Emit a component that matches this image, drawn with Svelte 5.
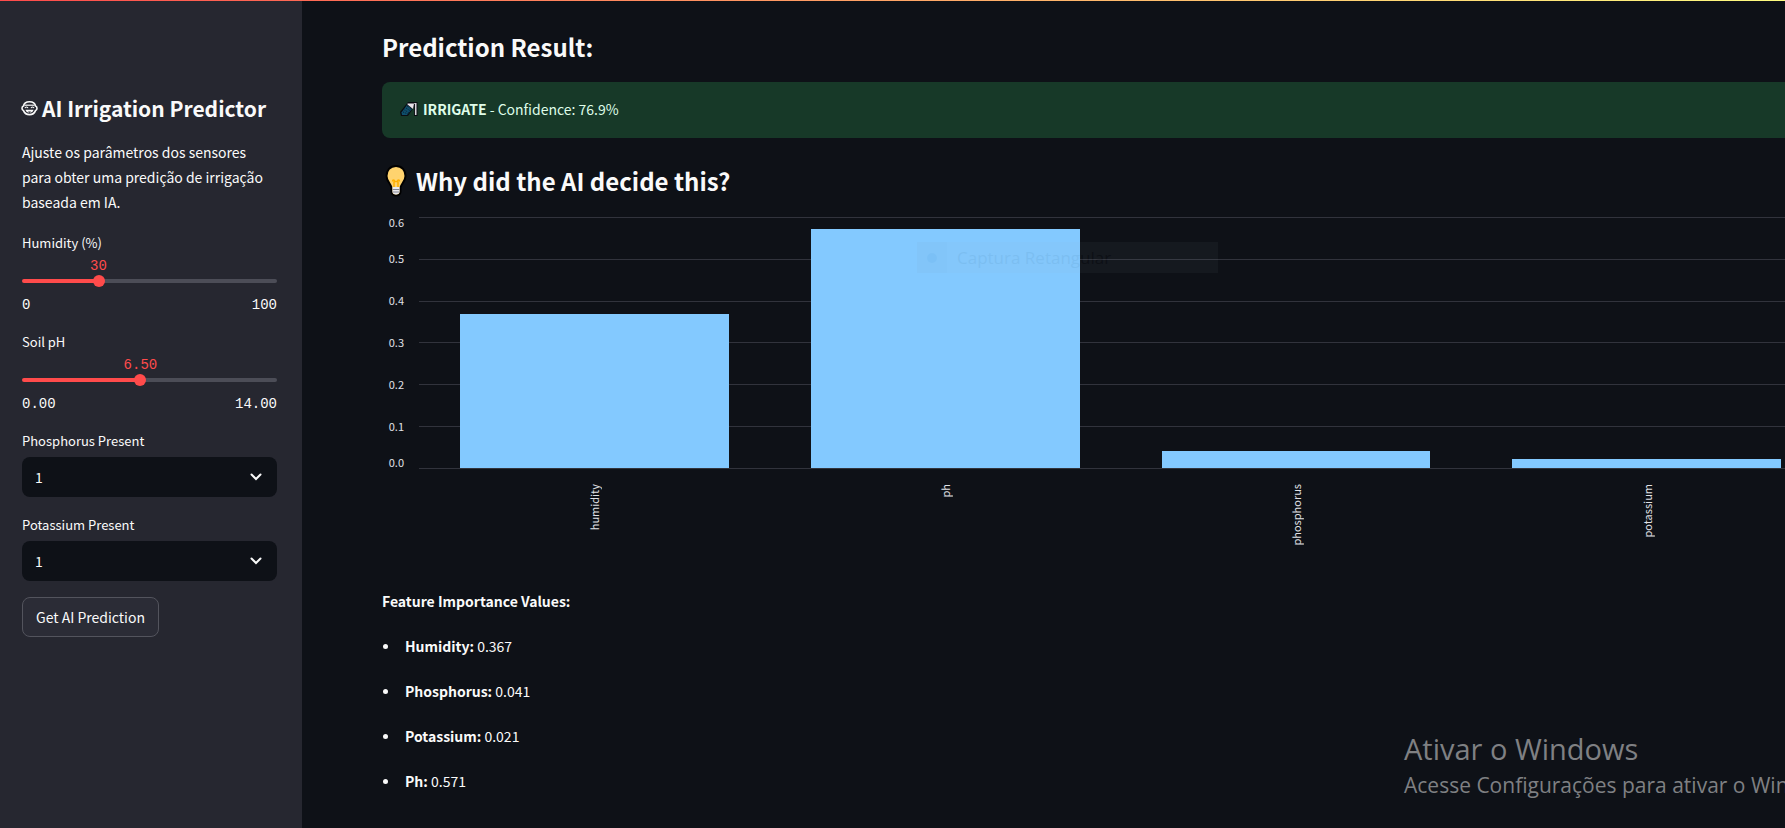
<script>
  let humidity = $state(30);
  let ph = $state(6.5);
  let phosphorus = $state('1');
  let potassium = $state('1');

  const ticks = ['0.6', '0.5', '0.4', '0.3', '0.2', '0.1'];
  const bars = [
    { name: 'humidity', value: 0.367 },
    { name: 'ph', value: 0.571 },
    { name: 'phosphorus', value: 0.041 },
    { name: 'potassium', value: 0.021 }
  ];
  const features = [
    ['Humidity:', '0.367'],
    ['Phosphorus:', '0.041'],
    ['Potassium:', '0.021'],
    ['Ph:', '0.571']
  ];
</script>

{#snippet chevron()}
  <svg class="chevron" width="12" height="8" viewBox="0 0 12 8" aria-hidden="true">
    <path d="M1.5 1.5 6 6l4.500-4.500" fill="none" stroke="#fafafa" stroke-width="2" stroke-linecap="round" />
  </svg>
{/snippet}

<div class="viewport">
  <div class="decoration"></div>
  <div class="app">
    <aside class="sidebar">
      <h1>
        <svg width="17" height="17" viewBox="0 0 17 17" aria-hidden="true">
          <path d="M2.500 6C3 3 5.500 1.800 8.500 1.800S14 3 14.500 6c2 .3 2 4.300 0 4.600-1 2.600-3 4-6 4s-5-1.400-6-4C.500 10.300.500 6.300 2.500 6Z" fill="#262730" stroke="#fafafa" stroke-width="1.600" />
          <path d="M3.500 5.200h10" stroke="#fafafa" stroke-width="1.200" />
          <path d="M4 8.200c.5-1.700 2.500-1.700 3 0M10 8.200c.5-1.700 2.500-1.700 3 0" fill="none" stroke="#fafafa" stroke-width="1.100" />
          <path d="M4.500 9.800h8c-.5 4-7.500 4-8 0Z" fill="#fafafa" />
          <path d="M7 11.500h3l-1.500 1.500Z" fill="#262730" />
        </svg>
        AI Irrigation Predictor
      </h1>
      <p class="intro">Ajuste os parâmetros dos sensores para obter uma predição de irrigação baseada em IA.</p>

      <div class="field">
        <label for="humidity">Humidity (%)</label>
        <div class="slider" style:--pos="{humidity}%">
          <output for="humidity">{humidity}</output>
          <div class="rail"><input id="humidity" type="range" min="0" max="100" bind:value={humidity} /></div>
          <div class="limits"><span>0</span><span>100</span></div>
        </div>
      </div>

      <div class="field">
        <label for="ph">Soil pH</label>
        <div class="slider" style:--pos="{(ph / 14) * 100}%">
          <output for="ph">{ph.toFixed(2)}</output>
          <div class="rail"><input id="ph" type="range" min="0" max="14" step="0.01" bind:value={ph} /></div>
          <div class="limits"><span>0.00</span><span>14.00</span></div>
        </div>
      </div>

      <div class="field">
        <label for="phosphorus">Phosphorus Present</label>
        <div class="select">
          <select id="phosphorus" bind:value={phosphorus}><option>1</option><option>0</option></select>
          {@render chevron()}
        </div>
      </div>

      <div class="field">
        <label for="potassium">Potassium Present</label>
        <div class="select">
          <select id="potassium" bind:value={potassium}><option>1</option><option>0</option></select>
          {@render chevron()}
        </div>
      </div>

      <button type="button">Get AI Prediction</button>
    </aside>

    <main>
      <h2>Prediction Result:</h2>
      <div class="alert" role="status">
        <svg width="18" height="16" viewBox="0 0 18 16" aria-hidden="true">
          <path d="M0 11 6.500 3 8 1h9.500v14H14V6l-6 9H1Z" fill="#0b0d12" />
          <path d="M1.500 11.500 7 4l5 4-5 6H2Z" fill="#0e4f6c" />
          <path d="m3 11 5 2M4.500 9l5 3M6 7l4.500 3M7 5l4.500 3.500" stroke="#0b2030" stroke-width="1" stroke-dasharray="1 1" />
          <path d="M7.500 2.500H14L13 8 7.500 3.500Z" fill="#e8e3ea" />
          <path d="M14 2h2.500v12h-1.500V4Z" fill="#d9d5dc" />
          <path d="M14.500 3v11" stroke="#14161c" stroke-width="1" />
        </svg>
        <p><strong>IRRIGATE</strong> - Confidence: 76.9%</p>
      </div>

      <h2 class="why">
        <svg width="28" height="34" viewBox="0 0 28 34" aria-hidden="true">
          <path d="M14 2C8 2 4.500 6.500 4.500 12c0 5 4 7.500 5 11.500V28c0 2 2 3.500 4.500 3.500s4.500-1.500 4.500-3.500v-4.500c1-4 5-6.500 5-11.500C23.500 6.500 20 2 14 2Z" fill="#ffd36e" stroke="#000" stroke-width="2" />
          <path d="M10.500 23h7v4.500c0 4-7 4-7 0Z" fill="#e9e9ee" />
          <path d="M10.500 25.500h7M10.500 28h7" stroke="#85858f" stroke-width="1" />
          <path d="M12 23v-5.500M16 23v-5.500M10.500 17.500c0-2 2-2 2 0h3c0-2 2-2 2 0" fill="none" stroke="#ffb000" stroke-width="1.500" />
        </svg>
        Why did the AI decide this?
      </h2>

      <figure class="chart" aria-label="Feature importance">
        <div class="axis">
          {#each ticks as t}<span class="tick">{t}</span>{/each}
          <span class="zero">0.0</span>
        </div>
        <div class="plot">
          <div class="grid">{#each ticks as t (t)}<i></i>{/each}</div>
          <div class="bars">
            {#each bars as b}
              <div class="slot"><div class="bar" style:height="{(b.value / 0.6) * 100}%"></div></div>
            {/each}
          </div>
        </div>
        <div class="names">
          {#each bars as b}<div class="name"><span>{b.name}</span></div>{/each}
        </div>
      </figure>

      <p class="caption"><strong>Feature Importance Values:</strong></p>
      <ul>
        {#each features as [name, value]}
          <li><span><strong>{name}</strong> {value}</span></li>
        {/each}
      </ul>
    </main>
  </div>

  <div class="capture">
    <span class="dot"><i></i></span>
    <span class="capture-label">Captura Retangular</span>
  </div>

  <div class="watermark">
    <div class="wm-title">Ativar o Windows</div>
    <div class="wm-text">Acesse Configurações para ativar o Windows.</div>
  </div>
</div>

<style>
  :global(body) {
    background: #0e1117;
  }
  .viewport {
    position: relative;
    overflow: hidden;
    color: #fafafa;
    font-family: "Noto Sans CJK SC", "Noto Sans", sans-serif;
    font-size: 14px;
    line-height: 26px;
  }
  .viewport :is(h1, h2, p, ul, figure) {
    margin: 0;
    padding: 0;
  }
  .decoration {
    position: absolute;
    inset: 0 0 auto;
    height: 1px;
    background: linear-gradient(90deg, #ff4b4b, #fffd80);
  }
  .app {
    display: grid;
    grid-template-columns: 302px 1fr;
    width: calc(100% + 37px);
    min-height: 100vh;
  }
  .sidebar {
    box-sizing: border-box;
    display: flex;
    flex-direction: column;
    align-items: stretch;
    gap: 16px;
    padding: 92px 25px 24px 22px;
    background: #262730;
  }
  h1 {
    display: flex;
    align-items: center;
    gap: 4px;
    font-size: 21px;
    font-weight: 600;
    line-height: 32px;
    white-space: nowrap;
  }
  h1 svg {
    margin-left: -1px;
  }
  .intro {
    line-height: 25px;
  }
  .field {
    display: flex;
    flex-direction: column;
  }
  label {
    font-size: 13px;
    line-height: 24px;
    padding-bottom: 4px;
  }
  .slider {
    position: relative;
    padding-top: 16px;
    font-family: "Liberation Mono", monospace;
    font-size: 14px;
    line-height: 18px;
  }
  output {
    position: absolute;
    top: -2px;
    left: var(--pos);
    transform: translateX(-50%);
    color: #ff4b4b;
  }
  .rail {
    position: relative;
    display: flex;
    align-items: center;
    height: 12px;
  }
  .rail::before {
    content: '';
    position: absolute;
    inset: 4px 0;
    border-radius: 2px;
    background: linear-gradient(90deg, #ff4b4b var(--pos), #4c4d57 var(--pos));
  }
  input[type='range'] {
    position: relative;
    appearance: none;
    flex: none;
    width: calc(100% + 12px);
    height: 12px;
    margin: 0 -6px;
    background: transparent;
  }
  input[type='range']::-webkit-slider-thumb {
    appearance: none;
    width: 12px;
    height: 12px;
    border-radius: 50%;
    background: #ff4b4b;
  }
  .limits {
    display: flex;
    justify-content: space-between;
    padding-top: 9px;
  }
  .select {
    display: grid;
    align-items: center;
  }
  .select > :global(*) {
    grid-area: 1 / 1;
  }
  select {
    appearance: none;
    height: 40px;
    padding: 0 13px;
    border: 0;
    border-radius: 8px;
    background: #0e1117;
    color: inherit;
    font: inherit;
  }
  .chevron {
    justify-self: end;
    margin-right: 15px;
    pointer-events: none;
  }
  button {
    align-self: flex-start;
    height: 40px;
    padding: 0 13px;
    border: 1px solid #53545d;
    border-radius: 8px;
    background: #2b2c36;
    color: inherit;
    font: inherit;
  }
  main {
    padding: 29px 0 0 80px;
    min-width: 0;
  }
  h2 {
    font-size: 24px;
    font-weight: 600;
    line-height: 36px;
  }
  .alert {
    display: flex;
    align-items: center;
    gap: 5px;
    box-sizing: border-box;
    height: 56px;
    margin: 17px 0 25px;
    padding: 0 18px 2px;
    border-radius: 8px;
    background: #173928;
    color: #dffde9;
  }
  .why {
    display: flex;
    align-items: center;
    gap: 6px;
  }
  .chart {
    display: grid;
    grid-template-columns: 37px 1fr;
    grid-template-rows: 252px 98px;
    padding-top: 18px !important;
    color: #e0e1e6;
    font-size: 11px;
    line-height: 14px;
  }
  .axis {
    position: relative;
    display: flex;
    flex-direction: column;
    padding-right: 15px;
    text-align: right;
  }
  .tick {
    flex: 1;
    margin-top: -8px;
    padding-bottom: 8px;
  }
  .tick:first-child {
    margin-top: -2px;
    padding-bottom: 2px;
  }
  .zero {
    position: absolute;
    right: 15px;
    bottom: 0;
  }
  .plot,
  .names {
    display: grid;
  }
  .plot > div {
    grid-area: 1 / 1;
    display: flex;
  }
  .plot > .grid {
    flex-direction: column;
  }
  .grid i {
    flex: 1;
    border-top: 1px solid #31333c;
  }
  .grid i:last-child {
    border-bottom: 1px solid #31333c;
  }
  .slot {
    flex: 1;
    display: flex;
    align-items: flex-end;
    padding: 0 41px;
    margin-bottom: 1px;
  }
  .bar {
    width: 100%;
    background: #83c9ff;
  }
  .names {
    grid-column: 2;
    grid-template-columns: repeat(4, 1fr);
    padding-top: 15px;
    justify-items: center;
  }
  .name span {
    writing-mode: vertical-rl;
    transform: rotate(180deg);
    display: block;
  }
  .caption {
    padding-top: 21px !important;
  }
  ul {
    display: grid;
    gap: 19px;
    margin-top: 19px !important;
    list-style: none;
  }
  li {
    display: flex;
    align-items: center;
    gap: 17px;
  }
  li::before {
    content: '';
    width: 5px;
    height: 5px;
    margin-left: 1px;
    border-radius: 50%;
    background: #fafafa;
  }
  .capture {
    position: absolute;
    top: 242px;
    left: 917px;
    display: flex;
    width: 301px;
    height: 31px;
    opacity: 0.05;
    background: #99aabb;
    color: #000;
    font-family: "Open Sans", "Noto Sans", sans-serif;
    font-size: 17px;
    line-height: 32px;
  }
  .dot {
    display: grid;
    place-items: center;
    width: 30px;
    margin-right: 10px;
    background: #778899;
  }
  .dot i {
    width: 10px;
    height: 10px;
    border-radius: 50%;
    background: #003366;
  }
  .watermark {
    position: absolute;
    left: calc(100% - 381px);
    bottom: 28px;
    color: #7f8083;
    font-family: "Open Sans", "Noto Sans", sans-serif;
    white-space: nowrap;
  }
  .wm-title {
    font-size: 29px;
    line-height: 42px;
  }
  .wm-text {
    font-size: 21px;
    line-height: 30px;
  }
</style>
